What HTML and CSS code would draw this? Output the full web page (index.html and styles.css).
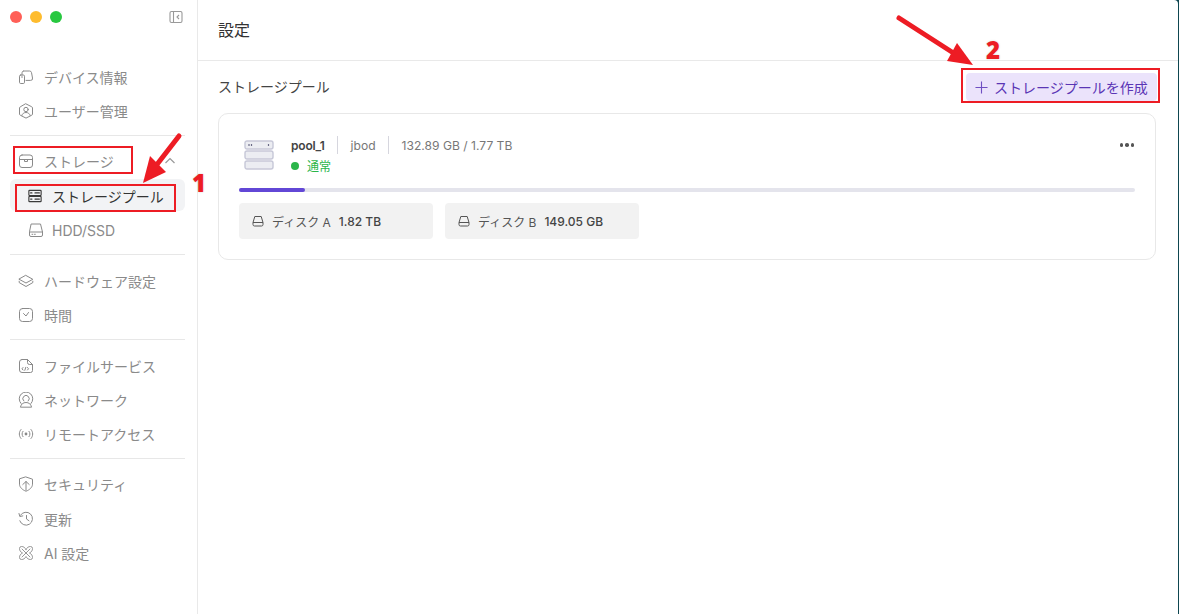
FILE: index.html
```html
<!DOCTYPE html>
<html lang="ja">
<head>
<meta charset="utf-8">
<title>設定</title>
<link rel="stylesheet" href="styles.css">
</head>
<body>
<div class="window">
  <aside class="sidebar">
    <div class="titlebar">
      <span class="light red"></span><span class="light yellow"></span><span class="light green"></span>
      <svg class="toggle" viewBox="0 0 14 14"><rect x="1" y="1.500" width="12" height="11" rx="1.500"/><path d="M4.500 1.500v11M10 5L8 7l2 2"/></svg>
    </div>
    <nav class="nav">
      <section class="group">
        <a class="item"><svg class="ico" viewBox="0 0 16 16"><path d="M5.500 2h6a2 2 0 0 1 2 1.600l1 5.400a2 2 0 0 1-2 2.400H8"/><path d="M4 6V3.800A1.800 1.800 0 0 1 5.500 2"/><rect x="1.500" y="6" width="5" height="8.500" rx="1.200"/><path d="M3.500 8h1"/></svg><span>デバイス情報</span></a>
        <a class="item"><svg class="ico" viewBox="0 0 16 16"><path d="M8 .9l5.600 2.800a1.500 1.500 0 0 1 .9 1.300v6a1.500 1.500 0 0 1-.9 1.300L8 15.100l-5.600-2.800a1.500 1.500 0 0 1-.9-1.300V5a1.500 1.500 0 0 1 .9-1.300z"/><circle cx="8" cy="6.500" r="2.200"/><path d="M3.800 12.500c.6-2 2.200-3 4.200-3s3.600 1 4.200 3"/></svg><span>ユーザー管理</span></a>
      </section>
      <section class="group">
        <a class="item"><svg class="ico" viewBox="0 0 16 16"><rect x="1.500" y="2" width="13" height="12.500" rx="2.500"/><path d="M1.500 6.500h13M6.500 6.500v2h3v-2"/></svg><span>ストレージ</span><svg class="chev" viewBox="0 0 12 8"><path d="M1.500 6L6 1.500 10.500 6"/></svg></a>
        <a class="item sub active"><svg class="ico dark" viewBox="0 0 16 16"><rect x="1" y="1.500" width="14" height="6" rx=".8"/><rect x="1" y="8.500" width="14" height="6" rx=".8"/><path class="thick" d="M3 4.500h1.500M8 4.500h5M3 11.500h1.500M8 11.500h5"/></svg><span>ストレージプール</span></a>
        <a class="item sub"><svg class="ico" viewBox="0 0 16 16"><path d="M3.500 2h9l2 8v3a1.500 1.500 0 0 1-1.500 1.500H3A1.500 1.500 0 0 1 1.500 13v-3z"/><path d="M1.500 10h13M4 12.300h.8M6.500 12.300h.8"/></svg><span>HDD/SSD</span></a>
      </section>
      <section class="group hw">
        <a class="item"><svg class="ico" viewBox="0 0 16 16"><path d="M8 2.500l6.800 3.800L8 10 1.200 6.300z"/><path d="M1.200 8.200v1.400L8 13.500l6.800-3.900V8.200"/></svg><span>ハードウェア設定</span></a>
        <a class="item"><svg class="ico" viewBox="0 0 16 16"><rect x="1.500" y="1.500" width="13" height="13" rx="3"/><path d="M5.500 6.500L8 9l2.500-3.500"/></svg><span>時間</span></a>
      </section>
      <section class="group files">
        <a class="item"><svg class="ico" viewBox="0 0 16 16"><path d="M4 1.500h5.500l5 5v6a2 2 0 0 1-2 2H4a2.500 2.500 0 0 1-2.500-2.500V4A2.500 2.500 0 0 1 4 1.500zM9.500 1.500v3a2 2 0 0 0 2 2h3M5 9.500l-1 1.300 1 1.200M7.800 9.300l-1 3M9.500 9.500l1 1.300-1 1.200"/></svg><span>ファイルサービス</span></a>
        <a class="item"><svg class="ico" viewBox="0 0 16 16"><path d="M3 11.500a6.800 6.800 0 1 1 10 0"/><path d="M5.800 9a3.200 3.200 0 1 1 4.400 0"/><path d="M2.500 14.800c.5-2.800 2.800-4.300 5.500-4.300s5 1.500 5.500 4.300z"/></svg><span>ネットワーク</span></a>
        <a class="item"><svg class="ico" viewBox="0 0 16 16"><path d="M3 3.500c-2.300 2.500-2.300 6.500 0 9M13 3.500c2.300 2.500 2.300 6.500 0 9M5 5.300c-1.300 1.600-1.300 3.800 0 5.400M11 5.300c1.300 1.600 1.300 3.800 0 5.400"/><circle class="fill" cx="8" cy="8" r="1.400"/></svg><span>リモートアクセス</span></a>
      </section>
      <section class="group last">
        <a class="item update"><svg class="ico" viewBox="0 0 16 16"><path d="M8 1l6.500 2.200v5c0 3-3 5.800-6.500 7-3.500-1.200-6.500-4-6.500-7v-5z"/><path d="M8 14V5.500M4.800 8.500L8 5.500l3.200 3"/></svg><span>セキュリティ</span></a>
        <a class="item"><svg class="ico" viewBox="0 0 16 16"><path d="M2.400 4.300A6.500 6.500 0 1 1 1.800 9.800M1 2.500l.8 3 3-.6M8.500 4.500V8l2.500 1.800"/></svg><span>更新</span></a>
        <a class="item"><svg class="ico thin" viewBox="0 0 16 16"><path d="M4 4l8 8M12 4l-8 8M8 4.500C7 2.500 5.500 1.500 3.500 1.500a2 2 0 0 0-2 2c0 2 1 3.500 3 4.500-2 1-3 2.500-3 4.500a2 2 0 0 0 2 2c2 0 3.500-1 4.500-3 1 2 2.500 3 4.500 3a2 2 0 0 0 2-2c0-2-1-3.500-3-4.500 2-1 3-2.500 3-4.500a2 2 0 0 0-2-2c-2 0-3.500 1-4.500 3z"/></svg><span>AI 設定</span></a>
      </section>
    </nav>
  </aside>
  <main class="main">
    <header class="header"><h1>設定</h1></header>
    <div class="content">
      <div class="section-head">
        <h2>ストレージプール</h2>
        <button class="create"><svg class="plus" viewBox="0 0 14 14"><path d="M7 .5v13M.5 7h13"/></svg>ストレージプールを作成</button>
      </div>
      <article class="card">
        <div class="card-top">
          <svg class="server" viewBox="0 0 30 30"><rect class="slot" x="1" y="1" width="28" height="8" rx="2"/><rect class="slot" x="1" y="11" width="28" height="8" rx="2"/><rect class="slot" x="1" y="21" width="28" height="8" rx="2"/><path class="pips" d="M5 4v2M7.500 4v2M24.500 4v2"/></svg>
          <div class="info">
            <div class="meta"><strong>pool_1</strong><span class="sep"></span><span>jbod</span><span class="sep"></span><span>132.89 GB / 1.77 TB</span></div>
            <div class="status"><i class="dot"></i>通常</div>
          </div>
          <div class="more"><i></i><i></i><i></i></div>
        </div>
        <div class="track"><div class="fill-bar" style="width:7.4%"></div></div>
        <div class="disks">
          <div class="disk"><svg class="disk-ico" viewBox="0 0 12 12"><path d="M2.800 1.500h6.400l1.800 6v2a1.500 1.500 0 0 1-1.500 1.500h-7A1.500 1.500 0 0 1 1 9.500v-2zM1 7.500h10"/></svg><span>ディスク A</span><b>1.82 TB</b></div>
          <div class="disk"><svg class="disk-ico" viewBox="0 0 12 12"><path d="M2.800 1.500h6.400l1.800 6v2a1.500 1.500 0 0 1-1.500 1.500h-7A1.500 1.500 0 0 1 1 9.500v-2zM1 7.500h10"/></svg><span>ディスク B</span><b>149.05 GB</b></div>
        </div>
      </article>
    </div>
  </main>
</div>
<div class="mark box-a"></div>
<div class="mark box-b"></div>
<div class="mark box-c"></div>
<svg class="arrows" viewBox="0 0 1179 614">
  <path class="shaft" d="M179 136L155 167"/>
  <path class="head" d="M143 183L150 156L166 172z"/>
  <path class="shaft" d="M899 18L955 54"/>
  <path class="head" d="M973 65L957 43L947 61z"/>
</svg>
<span class="num num-1">1</span>
<span class="num num-2">2</span>
</body>
</html>
```
FILE: styles.css
```css
* { box-sizing: border-box; }
html, body { margin: 0; height: 100%; }
body {
  width: 1179px;
  height: 614px;
  overflow: hidden;
  position: relative;
  background: #0e4650;
  font-family: Inter, "Noto Sans CJK JP", sans-serif;
  color: #333;
}
.window {
  width: 1178px;
  height: 614px;
  display: flex;
  background: #fff;
  border-top-right-radius: 4px;
}
.sidebar {
  width: 198px;
  flex: none;
  border-right: 1px solid #e9e9e9;
  padding: 0 12px 0 10px;
}
.titlebar {
  height: 33px;
  display: flex;
  align-items: center;
  gap: 8px;
  margin-bottom: 28px;
}
.light { width: 12px; height: 12px; border-radius: 50%; }
.red { background: #ff5f57; }
.yellow { background: #febc2e; }
.green { background: #28c840; }
.toggle {
  width: 14px;
  height: 14px;
  margin-left: auto;
  margin-right: 2px;
  fill: none;
  stroke: #999;
  stroke-width: 1.1;
}
.group {
  border-bottom: 1px solid #e7e7e7;
  padding-bottom: 8px;
  margin-bottom: 9px;
  display: flex;
  flex-direction: column;
  gap: 2px;
}
.group.hw { padding-top: 1px; }
.group.files { padding-top: 1px; }
.group.last { border-bottom: 0; }
.item {
  height: 32px;
  display: flex;
  align-items: center;
  gap: 10px;
  padding-left: 8px;
  font-size: 14px;
  color: #8a8a8a;
  border-radius: 6px;
}
.item.update { margin-bottom: 1px; }
.item.sub { padding-left: 18px; gap: 8px; }
.item.active { background: #f2f3f5; color: #333; margin-bottom: 1px; padding-top: 2px; }
.ico {
  width: 16px;
  height: 16px;
  flex: none;
  fill: none;
  stroke: #8a8a8a;
  stroke-width: 1;
  stroke-linejoin: round;
  stroke-linecap: round;
}
.ico.thin { stroke-width: .9; }
.ico.dark { stroke: #3a3a3a; stroke-width: 1.3; width: 14px; margin-right: 2px; }
.ico .thick { stroke-width: 1.4; }
.ico .fill { fill: #8a8a8a; stroke: none; }
.chev {
  width: 12px;
  height: 8px;
  margin-left: auto;
  margin-right: 9px;
  fill: none;
  stroke: #999;
  stroke-width: 1.2;
}
.main { flex: 1; display: flex; flex-direction: column; min-width: 0; }
.header {
  height: 61px;
  flex: none;
  display: flex;
  align-items: center;
  padding: 0 0 2px 20px;
  border-bottom: 1px solid #e9e9e9;
}
h1 { margin: 0; font-size: 16px; font-weight: 400; color: #333; }
.content { padding: 12px 22px 0 20px; }
.section-head {
  display: flex;
  justify-content: space-between;
  align-items: center;
  height: 28px;
  margin-bottom: 12px;
}
h2 { margin: 0 0 2px; font-size: 14px; font-weight: 400; color: #444; }
.create {
  height: 28px;
  width: 191px;
  margin-right: -1px;
  padding: 0 0 0 9px;
  display: flex;
  align-items: center;
  gap: 6px;
  border: 0;
  border-radius: 4px;
  background: #ebe3fb;
  color: #5a35b5;
  font-family: inherit;
  font-size: 14px;
}
.plus { width: 13px; height: 13px; fill: none; stroke: #6f4fc2; stroke-width: 1.2; flex: none; }
.card {
  height: 147px;
  border: 1px solid #e8e8e8;
  border-radius: 10px;
  padding: 26px 20px 0;
}
.card-top { display: flex; align-items: flex-start; height: 47px; margin-bottom: 1px; }
.server { width: 30px; height: 30px; margin-left: 5px; flex: none; }
.slot { fill: #ecedf2; stroke: #c7c8d8; stroke-width: 1.4; }
.pips { fill: none; stroke: #6b6b86; stroke-width: 1.2; }
.info { margin-left: 17px; margin-top: -4px; }
.meta {
  height: 18px;
  display: flex;
  align-items: center;
  gap: 12.5px;
  font-size: 12.1px;
  color: #777;
}
.meta strong { font-weight: 600; color: #444; letter-spacing: -.2px; font-size: 12px; }
.sep { width: 1px; height: 18px; background: #d6d6de; }
.status {
  margin-top: 3px;
  display: flex;
  align-items: center;
  gap: 8px;
  font-size: 12px;
  color: #2bb54a;
}
.dot { width: 8px; height: 8px; border-radius: 50%; background: #2bb54a; }
.more { margin-left: auto; margin-right: 1px; display: flex; gap: 2px; margin-top: 3px; }
.more i { width: 3.500px; height: 3.500px; border-radius: 50%; background: #555; }
.track { height: 4px; background: #e4e4ec; border-radius: 2px; }
.fill-bar { height: 4px; background: #6247d6; border-radius: 2px; }
.disks { display: flex; gap: 12px; margin-top: 11px; }
.disk {
  width: 194px;
  height: 36px;
  display: flex;
  align-items: center;
  padding-left: 13px;
  background: #f2f2f2;
  border-radius: 4px;
  font-size: 12px;
  color: #555;
}
.disk b { font-weight: 500; margin-left: 8px; color: #444; }
.disk-ico { width: 12px; height: 12px; margin-right: 8px; fill: none; stroke: #555; stroke-width: 1; }
.mark { position: absolute; border: 2px solid #ed1c24; }
.box-a { left: 13px; top: 146px; width: 120px; height: 28px; }
.box-b { left: 15px; top: 184px; width: 161px; height: 28px; }
.box-c { left: 961px; top: 68px; width: 199px; height: 35px; }
.arrows { position: absolute; left: 0; top: 0; width: 1179px; height: 614px; pointer-events: none; }
.shaft { fill: none; stroke: #ed1c24; stroke-width: 5; stroke-linecap: round; }
.head { fill: #ed1c24; }
.num {
  position: absolute;
  font-family: "Open Sans", sans-serif;
  font-weight: 800;
  font-size: 24px;
  line-height: 24px;
  color: #ed1c24;
  text-shadow: 0 0 2px #ccc;
}
.num-1 { left: 192px; top: 171px; }
.num-2 { left: 986px; top: 38px; }
```
